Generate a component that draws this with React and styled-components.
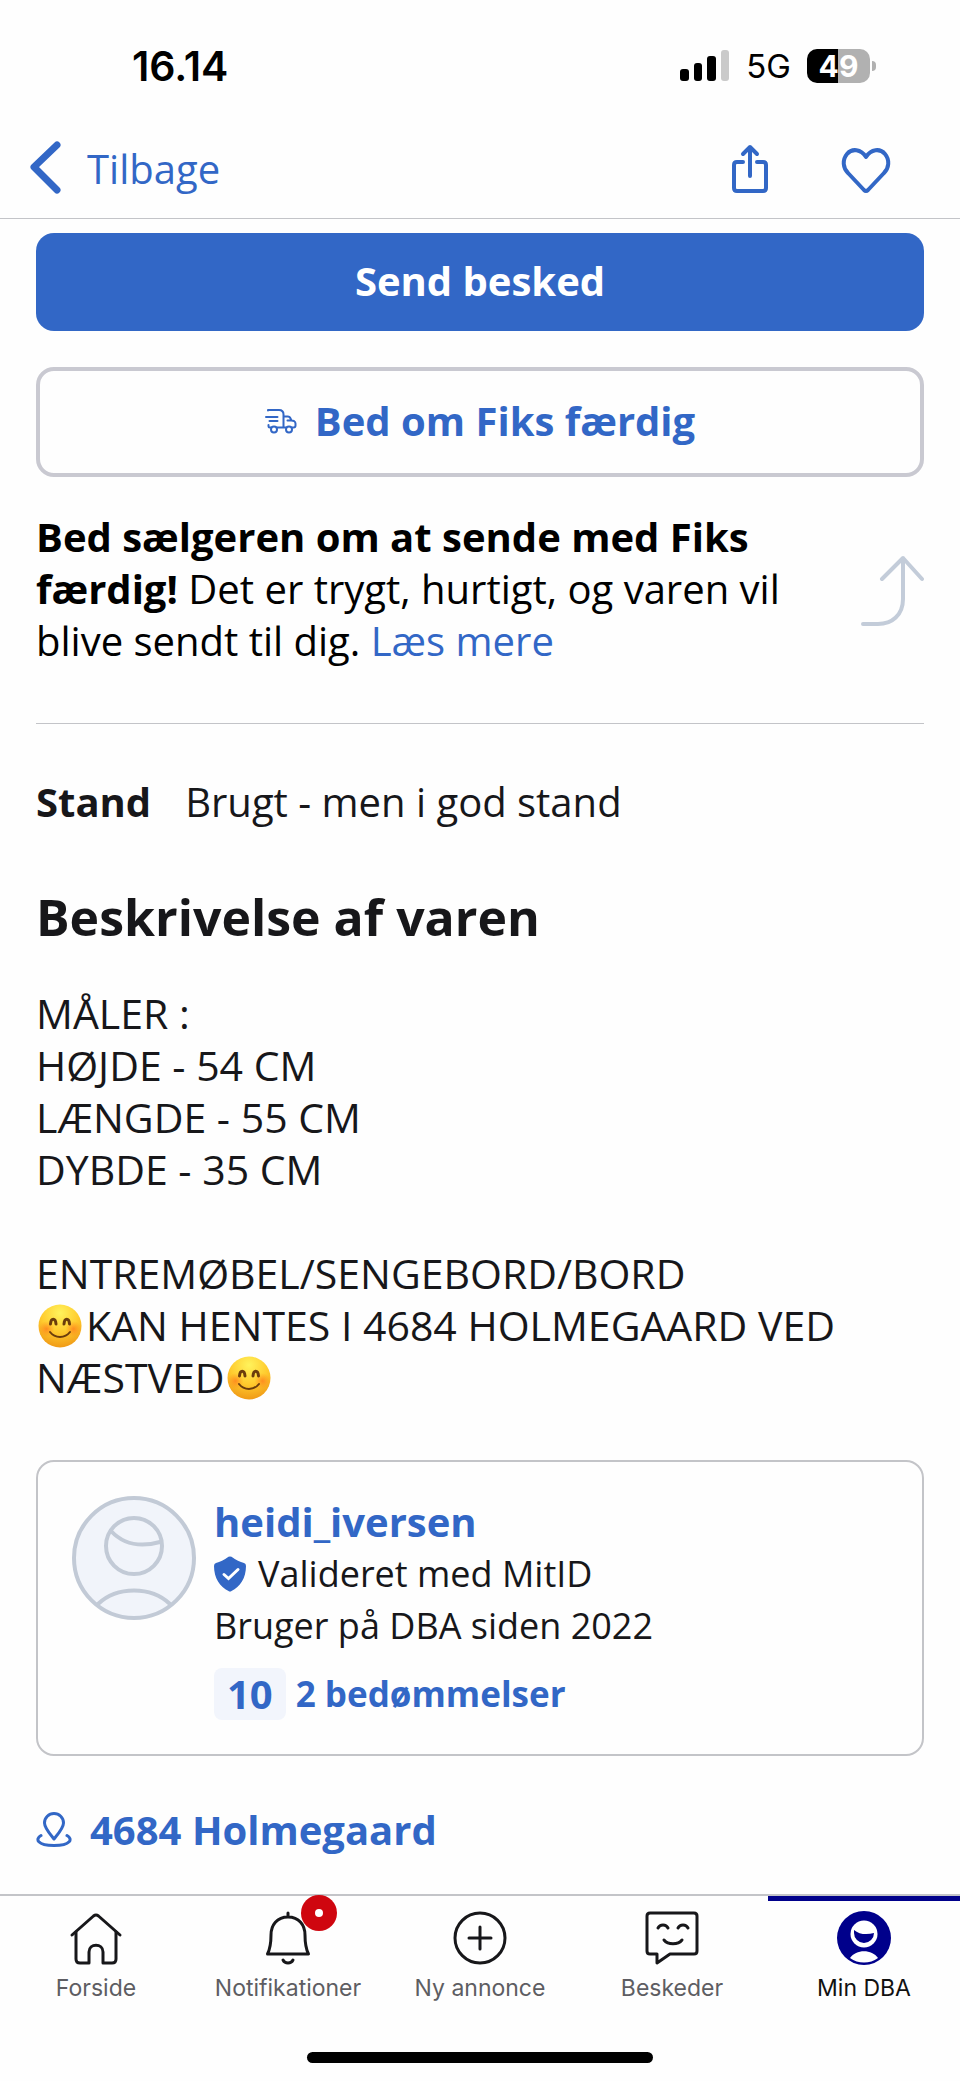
import styled, { createGlobalStyle } from "styled-components";

const blue = "#3267c6";
const navy = "#00008b";
const line = "#c3c4c8";
const ink = "#17171a";

const GlobalStyle = createGlobalStyle`
  * {
    box-sizing: border-box;
  }

  body {
    margin: 0;
    background: #fefefe;
    color: ${ink};
    font-family: "Open Sans", sans-serif;
    font-size: 40px;
    line-height: 52px;
  }

  svg {
    display: block;
    flex: none;
  }

  a {
    color: ${blue};
    text-decoration: none;
  }

  button {
    font: inherit;
    cursor: pointer;
  }
`;

const Page = styled.div`
  min-height: 100vh;
  display: flex;
  flex-direction: column;
`;

const StatusBar = styled.div`
  display: flex;
  align-items: center;
  justify-content: space-between;
  padding: 40px 84px 30px 132px;
  color: #000;
  font-family: Inter, sans-serif;
`;

const Time = styled.span`
  font-size: 41px;
  font-weight: 600;
`;

const StatusRight = styled.div`
  display: flex;
  align-items: center;
  gap: 16px;
`;

const Network = styled.span`
  font-size: 33px;
  line-height: 40px;
`;

const Battery = styled.div`
  display: flex;
  align-items: center;
  gap: 2px;
`;

const BatteryBody = styled.span`
  width: 63px;
  height: 34px;
  border-radius: 10px;
  background: linear-gradient(to right, #000 50%, #b1b1b1 50%);
  color: #fff;
  font-size: 30px;
  font-weight: 700;
  line-height: 34px;
  text-align: center;
`;

const BatteryTip = styled.span`
  width: 4px;
  height: 10px;
  border-radius: 0 4px 4px 0;
  background: #b1b1b1;
`;

const TopBar = styled.header`
  display: flex;
  align-items: center;
  justify-content: space-between;
  height: 97px;
  padding: 0 69px 2px 30px;
  border-bottom: 1px solid ${line};
`;

const BackLink = styled.a`
  display: flex;
  align-items: center;
  gap: 26px;
`;

const Actions = styled.div`
  display: flex;
  align-items: center;
  gap: 72px;
`;

const IconButton = styled.button`
  padding: 0;
  border: none;
  background: none;
  color: ${blue};
`;

const Main = styled.main`
  flex: 1;
  display: flex;
  flex-direction: column;
  padding: 14px 36px 34px;
`;

const Button = styled.button`
  display: flex;
  align-items: center;
  justify-content: center;
  gap: 18px;
  width: 100%;
  height: ${(props) => (props.$outline ? "110px" : "98px")};
  padding: 0 0 2px;
  border: ${(props) => (props.$outline ? "4px solid #c9c9d1" : "none")};
  border-radius: 18px;
  background: ${(props) => (props.$outline ? "transparent" : blue)};
  color: ${(props) => (props.$outline ? blue : "#fff")};
  font-weight: 700;
`;

const Buttons = styled.div`
  display: flex;
  flex-direction: column;
  gap: 36px;
`;

const Shipping = styled.section`
  display: flex;
  align-items: center;
  justify-content: space-between;
  gap: 60px;
  padding: 34px 0 56px;
  border-bottom: 1px solid ${line};
  color: #000;
`;

const ShippingText = styled.p`
  margin: 0;
  max-width: 760px;
`;

const Facts = styled.dl`
  display: flex;
  gap: 34px;
  margin: 52px 0 57px;

  dt {
    font-weight: 700;
  }

  dd {
    margin: 0;
  }
`;

const Heading = styled.h2`
  margin: 0 0 38px;
  font-size: 50px;
  font-weight: 700;
  line-height: 64px;
`;

const Description = styled.p`
  margin: 0;
  font-size: 41px;
  white-space: pre-line;

  svg {
    display: inline-block;
    margin: 0 4px 0 2px;
    vertical-align: -7px;
  }
`;

const SellerCard = styled.section`
  display: flex;
  gap: 18px;
  margin: 57px 0 48px;
  padding: 34px;
  border: 2px solid ${line};
  border-radius: 18px;
`;

const SellerInfo = styled.div`
  display: flex;
  flex-direction: column;
`;

const SellerName = styled.a`
  font-weight: 700;
`;

const SellerLine = styled.div`
  display: flex;
  align-items: center;
  gap: 12px;
  font-size: 36px;
`;

const Reviews = styled.a`
  display: flex;
  align-items: center;
  gap: 10px;
  margin-top: 16px;
  font-size: 35px;
  font-weight: 700;
`;

const Score = styled.span`
  padding: 0 13px;
  border-radius: 8px;
  background: #f2f5fc;
  font-size: 40px;
`;

const Location = styled.a`
  display: flex;
  align-items: center;
  gap: 18px;
  font-weight: 700;
`;

const TabBar = styled.nav`
  display: grid;
  grid-template-columns: repeat(5, 1fr);
  border-top: 2px solid ${line};
`;

const Tab = styled.a`
  display: flex;
  flex-direction: column;
  align-items: center;
  gap: 7px;
  padding-top: 10px;
  border-top: 5px solid ${(props) => (props.$active ? navy : "transparent")};
  color: ${(props) => (props.$active ? "#111" : "#5d5d62")};
  font-family: Inter, sans-serif;
  font-size: 23px;
  line-height: 32px;
`;

const TabIcon = styled.span`
  position: relative;
  color: ${ink};
`;

const Badge = styled.span`
  position: absolute;
  top: -16px;
  left: 40px;
  display: grid;
  place-items: center;
  width: 36px;
  height: 36px;
  border-radius: 50%;
  background: #cf060f;

  &::after {
    content: "";
    width: 8px;
    height: 8px;
    border-radius: 50%;
    background: #fff;
  }
`;

const HomeBar = styled.div`
  align-self: center;
  width: 36%;
  height: 11px;
  margin: 48px 0 18px;
  border-radius: 6px;
  background: #000;
`;

const stroke = {
  fill: "none",
  stroke: "currentColor",
  strokeLinecap: "round",
  strokeLinejoin: "round",
};

const SignalIcon = () => (
  <svg width="50" height="32" viewBox="0 0 50 32" aria-hidden="true">
    <rect x="0" y="19" width="9" height="12" rx="3" />
    <rect x="14" y="13" width="8" height="18" rx="3" />
    <rect x="27" y="6" width="9" height="25" rx="3" />
    <rect x="41" y="0" width="8" height="31" rx="3" fill="#cacaca" />
  </svg>
);

const BackIcon = () => (
  <svg width="31" height="56" viewBox="0 0 31 56" {...stroke} strokeWidth="7" aria-hidden="true">
    <path d="M27 4 4 26 27 49" />
  </svg>
);

const ShareIcon = () => (
  <svg width="38" height="50" viewBox="0 0 38 50" {...stroke} strokeWidth="4" aria-hidden="true">
    <path d="M12 18H6Q3 18 3 21V44Q3 47 6 47H32Q35 47 35 44V21Q35 18 32 18H26" />
    <path d="M19 32V3M12 10 19 3 26 10" />
  </svg>
);

const HeartIcon = () => (
  <svg width="50" height="50" viewBox="0 -4 50 50" {...stroke} strokeWidth="4" aria-hidden="true">
    <path d="M25 9C20 1 11 0 6 6C1 12 2 20 7 25L23 42Q25 44 27 42L43 25C48 20 49 12 44 6C39 0 30 1 25 9Z" />
  </svg>
);

const TruckIcon = () => (
  <svg width="32" height="26" viewBox="0 0 32 26" {...stroke} strokeWidth="2" aria-hidden="true">
    <path d="M3 2.500V2H14Q18.500 2 18.500 6.500V19.500M1 9H12.500M4.500 13H12.500M3.500 17V18Q3.500 19.500 5 19.500H6M12 19.500H21M27 19.500H28.500Q30.500 19.500 30.500 17.500V15.500Q30.500 14 29 13L26.500 12.500 25 9.500Q24.500 8.500 23 8.500H18.500M22.500 12.500H26.500" />
    <circle cx="9" cy="21.500" r="3" />
    <circle cx="24" cy="21.500" r="3" />
  </svg>
);

const CurvedArrowIcon = () => (
  <svg width="64" height="76" viewBox="0 -4 64 76" {...stroke} stroke="#c3ccd9" strokeWidth="4" aria-hidden="true">
    <path d="M3 69H18C32 69 43 60 43 44V3M22 24 43 3 62 24" />
  </svg>
);

const SmileEmoji = () => (
  <svg width="44" height="44" viewBox="0 0 44 44" role="img" aria-label="😊">
    <defs>
      <radialGradient id="face" cx="0.5" cy="0.2" r="0.8">
        <stop offset="0" stopColor="#fff35c" />
        <stop offset="0.55" stopColor="#ffcb2e" />
        <stop offset="1" stopColor="#f09a16" />
      </radialGradient>
      <radialGradient id="cheek">
        <stop offset="0" stopColor="#ff7a1c" stopOpacity="0.75" />
        <stop offset="1" stopColor="#ff8a1c" stopOpacity="0" />
      </radialGradient>
    </defs>
    <circle cx="22" cy="22" r="21.500" fill="url(#face)" />
    <circle cx="8.500" cy="25" r="8" fill="url(#cheek)" />
    <circle cx="35.500" cy="25" r="8" fill="url(#cheek)" />
    <g fill="none" stroke="#6b3d0c" strokeWidth="2" strokeLinecap="round">
      <path strokeWidth="3" d="M12.500 20C13 13.500 17.500 13.500 18 20M26 20C26.500 13.500 31 13.500 31.500 20" />
      <path d="M12 28C17 34.500 27 34.500 32 28" />
    </g>
  </svg>
);

const AvatarIcon = () => (
  <svg width="124" height="124" viewBox="0 0 124 124" {...stroke} stroke="#c2cad6" strokeWidth="4" aria-hidden="true">
    <circle cx="62" cy="62" r="60" fill="#f1f4fa" />
    <circle cx="62" cy="50" r="28" />
    <path d="M39 35C52 49 70 51 88 46M26 108C45 90 79 90 98 108" />
  </svg>
);

const ShieldIcon = () => (
  <svg width="32" height="36" viewBox="0 0 32 36" aria-hidden="true">
    <path d="M14.500.8Q16 0 17.500.8C22 4 26 6 30 7Q32 7.500 32 10C32 22 26 31 17.500 35Q16 36 14.500 35C6 31 0 22 0 10Q0 7.500 2 7C6 6 10 4 14.500.8Z" fill={blue} />
    <path d="M10 18.500 14.500 22.500 24 13.500" fill="none" stroke="#fff" strokeWidth="3" strokeLinecap="round" />
  </svg>
);

const PinIcon = () => (
  <svg width="36" height="36" viewBox="0 0 36 36" {...stroke} strokeWidth="3" aria-hidden="true">
    <path d="M18 27C14 22 8.500 16 8.500 11A9.500 9.500 0 0 1 27.500 11C27.500 16 22 22 18 27Z" />
    <path d="M5 23.500C-1 27 1 33.500 18 33.500C35 33.500 37 27 31 23.500" />
  </svg>
);

const HomeIcon = () => (
  <svg width="54" height="54" viewBox="0 0 54 54" {...stroke} strokeWidth="3" aria-hidden="true">
    <path d="M3 24 24.500 5Q27 3 29.500 5L51 24" />
    <path d="M7 21V48Q7 52 11 52H20V41C20 32 34 32 34 41V52H43Q47 52 47 48V21" />
  </svg>
);

const BellIcon = () => (
  <svg width="54" height="54" viewBox="0 0 54 54" {...stroke} strokeWidth="3" aria-hidden="true">
    <path d="M27 2V6M27 6C38 6 44 14 44 24C44 33 45 38 47.500 43H6.500C9 38 10 33 10 24C10 14 16 6 27 6Z" />
    <path d="M22 49C24 53 30 53 32 49" />
  </svg>
);

const PlusIcon = () => (
  <svg width="54" height="54" viewBox="0 0 54 54" {...stroke} strokeWidth="3" aria-hidden="true">
    <circle cx="27" cy="27" r="25" />
    <path d="M27 16V38M16 27H38" />
  </svg>
);

const ChatIcon = () => (
  <svg width="54" height="54" viewBox="0 0 54 54" {...stroke} strokeWidth="3" aria-hidden="true">
    <path d="M5 2H49Q52 2 52 5V40Q52 43 49 43H25L12 52V43H5Q2 43 2 40V5Q2 2 5 2Z" />
    <path d="M13 17C15 13 21 13 23 17M33 17C35 13 41 13 43 17M19 29C23 34 33 34 37 29" />
  </svg>
);

const ProfileIcon = () => (
  <svg width="54" height="54" viewBox="0 0 54 54" aria-hidden="true">
    <circle cx="27" cy="27" r="27" fill={navy} />
    <circle cx="27" cy="23" r="13.500" fill="#fff" />
    <path d="M17 19C22 23.500 30 24 37 22A10 10 0 0 1 17 22Z" fill={navy} />
    <path d="M13 47C19 38 35 38 41 47C33 53 21 53 13 47Z" fill="#fff" />
  </svg>
);

const tabs = [
  { label: "Forside", Icon: HomeIcon },
  { label: "Notifikationer", Icon: BellIcon, badge: true },
  { label: "Ny annonce", Icon: PlusIcon },
  { label: "Beskeder", Icon: ChatIcon },
  { label: "Min DBA", Icon: ProfileIcon, active: true },
];

const App = () => {
  return (
    <Page>
      <GlobalStyle />
      <StatusBar>
        <Time>16.14</Time>
        <StatusRight>
          <SignalIcon />
          <Network>5G</Network>
          <Battery>
            <BatteryBody>49</BatteryBody>
            <BatteryTip />
          </Battery>
        </StatusRight>
      </StatusBar>
      <TopBar>
        <BackLink href="#">
          <BackIcon />
          Tilbage
        </BackLink>
        <Actions>
          <IconButton aria-label="Del">
            <ShareIcon />
          </IconButton>
          <IconButton aria-label="Gem">
            <HeartIcon />
          </IconButton>
        </Actions>
      </TopBar>
      <Main>
        <Buttons>
          <Button>Send besked</Button>
          <Button $outline>
            <TruckIcon />
            Bed om Fiks færdig
          </Button>
        </Buttons>
        <Shipping>
          <ShippingText>
            <b>Bed sælgeren om at sende med Fiks færdig!</b> Det er trygt,
            hurtigt, og varen vil blive sendt til dig. <a href="#">Læs mere</a>
          </ShippingText>
          <CurvedArrowIcon />
        </Shipping>
        <Facts>
          <dt>Stand</dt>
          <dd>Brugt - men i god stand</dd>
        </Facts>
        <Heading>Beskrivelse af varen</Heading>
        <Description>
          {"MÅLER :\nHØJDE - 54 CM\nLÆNGDE - 55 CM\nDYBDE - 35 CM\n\nENTREMØBEL/SENGEBORD/BORD\n"}
          <SmileEmoji />
          {"KAN HENTES I 4684 HOLMEGAARD VED NÆSTVED"}
          <SmileEmoji />
        </Description>
        <SellerCard>
          <AvatarIcon />
          <SellerInfo>
            <SellerName href="#">heidi_iversen</SellerName>
            <SellerLine>
              <ShieldIcon />
              Valideret med MitID
            </SellerLine>
            <SellerLine>Bruger på DBA siden 2022</SellerLine>
            <Reviews href="#">
              <Score>10</Score>2 bedømmelser
            </Reviews>
          </SellerInfo>
        </SellerCard>
        <Location href="#">
          <PinIcon />
          4684 Holmegaard
        </Location>
      </Main>
      <TabBar>
        {tabs.map(({ label, Icon, badge, active }) => (
          <Tab key={label} href="#" $active={active}>
            <TabIcon>
              <Icon />
              {badge && <Badge />}
            </TabIcon>
            {label}
          </Tab>
        ))}
      </TabBar>
      <HomeBar />
    </Page>
  );
};

export default App;
